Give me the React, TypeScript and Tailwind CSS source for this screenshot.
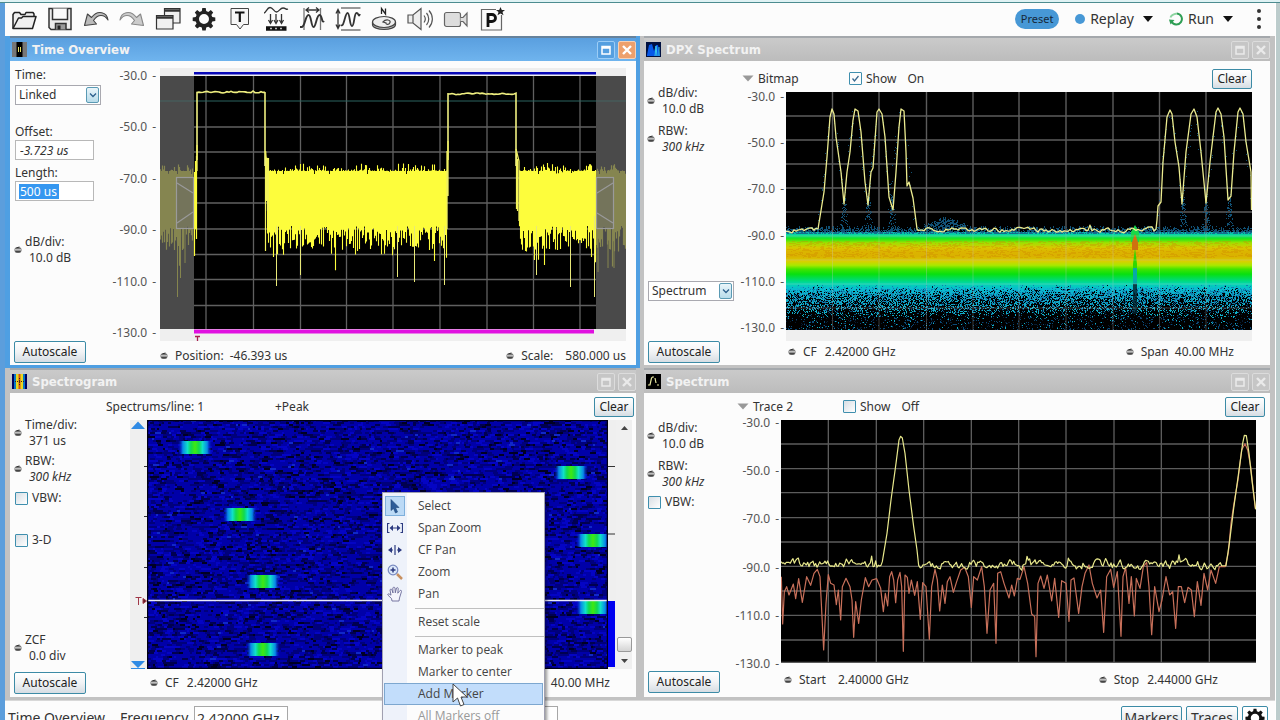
import React from "react";

/* ---------- deterministic noise ---------- */
function rng(seed: number) {
  let s = seed;
  return () => {
    s = (s + 0x6d2b79f5) | 0;
    let t = Math.imul(s ^ (s >>> 15), 1 | s);
    t = (t + Math.imul(t ^ (t >>> 7), 61 | t)) ^ t;
    return ((t ^ (t >>> 14)) >>> 0) / 4294967296;
  };
}

function noiseLine(from: number, to: number, mid: number, amp: number, seed: number, step = 2): number[][] {
  const r = rng(seed);
  const out: number[][] = [];
  let v = 0;
  for (let x = from; x <= to; x += step) {
    v = v * 0.55 + (r() - 0.5) * amp;
    out.push([x, mid + v - (r() > 0.97 ? amp * 0.8 : 0)]);
  }
  return out;
}
const toPath = (pts: number[][]) => "M" + pts.map((p) => `${p[0].toFixed(1)} ${p[1].toFixed(1)}`).join("L");

/* ---------- time overview plot ---------- */
function timeBars(from: number, to: number, seed: number) {
  const r = rng(seed);
  let d = "";
  for (let x = from; x < to; x++) {
    const top = 110 - Math.pow(r(), 4) * 8 + (r() > 0.9 ? 3 : 0);
    const a = r();
    let bottom = 165 + Math.pow(r(), 1.2) * 24 + (a > 0.8 ? 10 : 0);
    if (a > 0.95) bottom += 14;
    d += `M${x + 0.5} ${top.toFixed(1)}V${bottom.toFixed(1)}`;
  }
  return d;
}
const spikes = "M116.5 165V225M140.5 165V214M237.5 165V216M254.5 165V221M284.5 165V224M376.5 165V214M410.5 165V226M434.5 155V236";
const pulse = (x0: number, x1: number, y: number, seed: number) => {
  const pts = noiseLine(x0, x1, y, 1.6, seed, 2);
  return toPath([[x0, 99], ...pts, [x1, y], [x1, 105]]);
};

function TimePlot() {
  return (
    <svg viewBox="0 0 466 280" preserveAspectRatio="none" className="block h-full w-full" aria-label="Amplitude against time">
      <rect y="7" width="466" height="8" fill="#eeeeee" />
      <rect y="15" width="466" height="254" fill="#000" />
      <rect y="268" width="466" height="12" fill="#efefef" />
      <path d="M46 15V268M93.500 15V268M140.500 15V268M186.500 15V268M233 15V268M280 15V268M327 15V268M373.500 15V268M420 15V268M34 66H436M34 91H436M34 117H436M34 142H436M34 168H436M34 193.500H436M34 218.500H436M34 244.500H436" stroke="#606060" strokeWidth="1.3" />
      <path d="M34 40H436" stroke="#2c6460" strokeWidth="1.200" />
      <rect y="15" width="34" height="253" fill="#4a4a4a" />
      <rect x="436" y="15" width="30" height="253" fill="#4a4a4a" />
      <path d="M0 40H34M436 40H466" stroke="#456260" />
      <path d={timeBars(0, 33, 5)} stroke="#858550" strokeWidth="1.200" />
      <path d="M17.500 165V236M20.500 165V217M25 165V202M438 166V211M448 165V207M454 165V207" stroke="#85854e" />
      <path d={timeBars(436, 466, 9)} stroke="#858550" strokeWidth="1.200" />
      <path d={timeBars(107, 287, 21)} stroke="#fdfd3c" strokeWidth="1.100" />
      <path d={timeBars(359, 436, 33)} stroke="#fdfd3c" strokeWidth="1.100" />
      <path d={spikes} stroke="#e8e878" />
      <path d="M34.500 111V195M35.500 100V168M36.500 95V178" stroke="#fdfd3c" strokeWidth="1.200" />
      <path d="M105.500 95V190M106.500 97V140M107.500 98V150M108.500 97V166M356.500 92V148M357.500 98V150" stroke="#f4f45a" strokeWidth="1.200" />
      <path d={pulse(37, 105, 31, 3)} fill="none" stroke="#efef80" strokeWidth="1.600" />
      <path d="M105.500 90L106 97L108 98V110" fill="none" stroke="#efef60" strokeWidth="1.500" />
      <path d={pulse(288, 356, 33, 14)} fill="none" stroke="#efef80" strokeWidth="1.600" />
      <path d="M288 80V135M287 90V168M37 84V110M356 88L359 100V160" fill="none" stroke="#efef60" strokeWidth="1.300" />
      <g fill="#66666688" stroke="#9a9a9a" strokeWidth="1.200">
        <rect x="16.500" y="116.500" width="17" height="51" />
        <rect x="436.500" y="116.500" width="17" height="51" />
        <path d="M17 122L33 132M17 162L33 151M437 132L453 122M437 152L453 162" />
      </g>
      <rect x="34" y="11" width="402" height="2.500" fill="#0808b8" />
      <rect x="34" y="268.500" width="400" height="4" fill="#e010e0" />
      <path d="M35 275.500H40M37.500 275.500V281" stroke="#a82050" strokeWidth="1.300" />
    </svg>
  );
}

/* ---------- DPX plot ---------- */
const dpxPeaksLeft = [[32, 137], [38, 100], [41, 65], [44, 25], [46, 17], [48, 22], [50, 45], [55, 80], [58, 112], [61, 80], [64, 60], [67, 28], [69, 17], [72, 19], [75, 40], [79, 90], [82, 113], [85, 80], [87, 76], [91, 20], [93, 17], [96, 22], [99, 45], [103, 105], [107, 118], [110, 80], [113, 35], [115, 17], [118, 19], [120, 60], [121, 94], [123, 90], [127, 106], [131, 137]];
const dpxPeaksRight = [[370, 137], [371, 128], [372, 114], [375, 110], [377, 70], [381, 25], [384, 18], [386, 22], [389, 50], [393, 75], [396, 112], [400, 60], [405, 22], [408, 17], [411, 25], [415, 60], [420, 111], [424, 70], [430, 20], [432, 16], [435, 22], [438, 45], [442, 108], [445, 104], [448, 60], [452, 20], [454, 16], [457, 22], [460, 50], [465, 80], [465.5, 118]];
const dpxTrace = toPath([
  ...noiseLine(0, 31, 138, 4, 41),
  ...dpxPeaksLeft,
  ...noiseLine(132, 369, 138, 4, 47),
  ...dpxPeaksRight,
]);

function specks(seed: number) {
  const cols = ["#061a30", "#0a4a78", "#0e80b0", "#10b0c8", "#000000"];
  const d = cols.map(() => "");
  const r = rng(seed);
  for (let y = 192; y < 238; y++) {
    const t = (y - 192) / 46;
    const black = Math.min(0.84, t * 1.15);
    for (let x = 0; x < 466; x += 1) {
      const q = r();
      let i = 3;
      if (q < black) i = 4;
      else if (q < black + 0.05) i = 0;
      else if (q < black + 0.08 + t * 0.06) i = 1;
      else if (q < 0.6 + t * 0.4) i = 2;
      if (t < 0.25 && r() > t * 4) continue;
      d[i] += `M${x} ${y + 0.5}h1`;
    }
  }
  return cols.map((c, i) => ({ c, d: d[i] }));
}
function haze(seed: number) {
  const r = rng(seed);
  let d = "";
  for (let x = 0; x < 466; x++) {
    const bump = x > 132 && x < 185 ? 9 * Math.sin(((x - 132) / 53) * Math.PI) : 0;
    const n = 3 + r() * 5 + bump;
    for (let k = 0; k < n; k++) if (r() > 0.35) d += `M${x} ${(141 - k).toFixed(0)}.5h1`;
  }
  for (const c of [58, 82, 106, 397, 420, 443])
    for (let k = 0; k < 70; k++) {
      const h = r() * 34;
      d += `M${(c + (r() - 0.5) * (9 - h / 5)).toFixed(0)} ${(138 - h).toFixed(0)}.5h1`;
    }
  for (const c of [46, 69, 93, 115, 384, 408, 432, 454])
    for (let k = 0; k < 36; k++) {
      const h = r() * 110;
      const s = r() > 0.5 ? 1 : -1;
      d += `M${(c + s * (h / 9 + r() * 3)).toFixed(0)} ${(18 + h).toFixed(0)}.5h1`;
    }
  return d;
}
function grain(seed: number) {
  const r = rng(seed);
  let d = "";
  for (let k = 0; k < 1500; k++) d += `M${(r() * 464).toFixed(0)} ${Math.floor(149 + r() * 17)}.5h${(1 + r() * 3).toFixed(0)}`;
  return d;
}

function DpxPlot() {
  return (
    <svg viewBox="0 0 466 238" preserveAspectRatio="none" className="block min-h-0 w-full flex-1" aria-label="DPX bitmap of amplitude against frequency">
      <defs>
        <linearGradient id="dpx" x1="0" y1="140" x2="0" y2="238" gradientUnits="userSpaceOnUse">
          <stop offset="0" stopColor="#10a8b0" />
          <stop offset="0.030" stopColor="#00dca0" />
          <stop offset="0.070" stopColor="#20e818" />
          <stop offset="0.110" stopColor="#a0e000" />
          <stop offset="0.160" stopColor="#d8c800" />
          <stop offset="0.200" stopColor="#dcb400" />
          <stop offset="0.250" stopColor="#dab200" />
          <stop offset="0.300" stopColor="#d8d000" />
          <stop offset="0.340" stopColor="#a8e800" />
          <stop offset="0.380" stopColor="#40e400" />
          <stop offset="0.430" stopColor="#08e010" />
          <stop offset="0.480" stopColor="#00dc60" />
          <stop offset="0.530" stopColor="#00d8b0" />
          <stop offset="0.580" stopColor="#08bcd0" />
          <stop offset="1" stopColor="#0890c0" />
        </linearGradient>
      </defs>
      <rect width="466" height="238" fill="#000" />
      <path d="M46.500 0V238M93 0V238M140.500 0V238M187 0V238M233 0V238M280 0V238M327 0V238M373.500 0V238M420 0V238M0 24H466M0 48H466M0 72H466M0 96H466M0 120H466" stroke="#5c5c5c" strokeWidth="1.400" />
      <rect y="140" width="466" height="64" fill="url(#dpx)" />
      <path d={haze(71)} stroke="#14608a" strokeWidth="1" opacity="0.850" />
      <path d={grain(61)} stroke="#d08800" strokeWidth="1" opacity="0.350" />
      {specks(81).map((s) => (
        <path key={s.c} d={s.d} stroke={s.c} strokeWidth="1" />
      ))}
      <path d="M345 140L349 133L353 140V150H345Z" fill="#18d848" />
      <path d="M346 150L349 142L352 150V158H346Z" fill="#d07010" />
      <path d="M349 156L351 172V188H347V172Z" fill="#30d800" />
      <path d="M347 176H351V194H347Z" fill="#08a8a8" />
      <path d="M347 192H351V222H347Z" fill="#04202c" opacity="0.800" />
      <path d="M46.500 140V238M93 140V238M140.500 140V238M187 140V238M233 140V238M280 140V238M327 140V238M373.500 140V238M420 140V238M0 144H466M0 168H466M0 192H466M0 216H466" stroke="#c8c8c8" strokeWidth="1" opacity="0.300" />
      <path d={dpxTrace} fill="none" stroke="#ecec90" strokeWidth="1.300" strokeLinejoin="round" />
    </svg>
  );
}

/* ---------- spectrum plot, three units per pixel ---------- */
const shift = (pts: number[][], dx: number, dy: number) => pts.map(([x, y]) => [x + dx, y + dy]);
const orangeTrace = toPath([
  ...shift(
    [[424, 530], [428, 672], [433, 575], [440, 560], [447, 585], [460, 552], [467, 596], [476, 536], [487, 607], [500, 530], [512, 556], [522, 520], [532, 508], [540, 530], [551, 750], [558, 610], [565, 524], [572, 550], [582, 555], [589, 614], [595, 570], [602, 660], [607, 560], [618, 535], [630, 560], [636, 600], [641, 712], [647, 605], [656, 670], [664, 600], [676, 533], [686, 560], [696, 540], [710, 536], [722, 565], [730, 635], [736, 580], [743, 618], [749, 530], [755, 515], [761, 540], [767, 608], [773, 540], [780, 517], [785, 560], [790, 754], [795, 525], [802, 532], [807, 580], [814, 540], [824, 586], [832, 545], [841, 658], [848, 548], [858, 560], [868, 718], [875, 560], [885, 508], [892, 540], [899, 633], [907, 555], [915, 610], [922, 545], [930, 530], [940, 577], [950, 545]],
    -423,
    -60
  ),
  ...shift(
    [[2, 600], [14, 592], [25, 620], [34, 712], [41, 620], [52, 630], [65, 590], [73, 650], [81, 790], [90, 660], [101, 640], [108, 820], [113, 610], [122, 605], [132, 640], [147, 684], [155, 645], [163, 678], [172, 625], [180, 628], [192, 590], [203, 640], [215, 732], [224, 740], [228, 860], [234, 640], [242, 618], [252, 655], [262, 615], [275, 693], [284, 625], [296, 742], [305, 632], [318, 640], [327, 754], [333, 630], [342, 624], [356, 730], [366, 650], [375, 610], [387, 585], [397, 640], [411, 684], [422, 660], [431, 787], [440, 620], [452, 598], [461, 652], [472, 605], [483, 799], [489, 620], [497, 592], [507, 700], [514, 620], [523, 738], [529, 625], [540, 655], [550, 590], [560, 577], [567, 650], [575, 794], [584, 650], [597, 725], [606, 690], [618, 620], [629, 675], [638, 665], [647, 775], [655, 650], [664, 650], [674, 698], [684, 652], [694, 660], [703, 740], [712, 635], [723, 706], [732, 610], [743, 660], [753, 600], [767, 640], [778, 590], [796, 590], [805, 548], [813, 460], [822, 400], [834, 330], [845, 240], [855, 221], [863, 240], [872, 290], [886, 416]],
    537,
    -150
  ),
]);
const yellowTrace = toPath([
  ...noiseLine(0, 300, 433, 22, 101, 4),
  [304, 425], [318, 340], [330, 240], [345, 130], [354, 60], [359, 49], [364, 54], [372, 100], [384, 210], [398, 320], [408, 390], [413, 436],
  ...noiseLine(418, 1325, 434, 22, 109, 4),
  [1335, 437], [1345, 370], [1358, 265], [1372, 165], [1385, 70], [1390, 46], [1396, 47], [1404, 100], [1414, 190], [1424, 268],
]);

function SpectrumPlot() {
  return (
    <svg viewBox="0 0 1425 729" preserveAspectRatio="none" className="block min-h-0 w-full flex-1" aria-label="Amplitude against frequency">
      <rect width="1425" height="729" fill="#000" />
      <path d="M142 0V729M286 0V729M428 0V729M571 0V729M713 0V729M855 0V729M999 0V729M1141 0V729M1285 0V729M0 72H1425M0 146H1425M0 218H1425M0 293H1425M0 366H1425M0 439H1425M0 513H1425M0 586H1425M0 660H1425M0 727H1425" stroke="#5c5c5c" strokeWidth="4" />
      <path d={orangeTrace} fill="none" stroke="#c8705a" strokeWidth="3.600" strokeLinejoin="round" />
      <path d={yellowTrace} fill="none" stroke="#e8e88c" strokeWidth="3.600" strokeLinejoin="round" />
    </svg>
  );
}

/* ---------- spectrogram plot ---------- */
function blueCells(seed: number) {
  const cols = ["#000024", "#000050", "#00007c", "#0000a8", "#0404c4", "#1028c8"];
  const lim = [0.06, 0.2, 0.42, 0.84, 0.988, 1];
  const d = cols.map(() => "");
  const r = rng(seed);
  for (let y = 0; y < 250; y += 2) {
    let x = -2;
    while (x < 462) {
      const w = 2 + Math.floor(r() * 5);
      const q = r();
      const i = lim.findIndex((l) => q <= l);
      d[i] += `M${x} ${y + 1}h${w}`;
      x += w;
    }
  }
  return cols.map((c, i) => ({ c, d: d[i] }));
}
const bursts = [[48, 27], [93, 94], [116, 161], [116, 229], [424, 52], [446, 120], [446, 187]];

function SpectrogramPlot() {
  return (
    <svg viewBox="0 0 461 249" preserveAspectRatio="none" className="block h-full min-w-0 flex-1" aria-label="Spectrogram">
      <defs>
        <linearGradient id="burst">
          <stop offset="0" stopColor="#0010c0" stopOpacity="0" />
          <stop offset="0.140" stopColor="#0888e8" />
          <stop offset="0.280" stopColor="#10e0c8" />
          <stop offset="0.380" stopColor="#10d850" />
          <stop offset="0.500" stopColor="#40e810" />
          <stop offset="0.620" stopColor="#10d850" />
          <stop offset="0.720" stopColor="#10e0c8" />
          <stop offset="0.860" stopColor="#0888e8" />
          <stop offset="1" stopColor="#0010c0" stopOpacity="0" />
        </linearGradient>
      </defs>
      <rect width="461" height="249" fill="#000090" />
      {blueCells(131).map((b) => (
        <path key={b.c} d={b.d} stroke={b.c} strokeWidth="2" />
      ))}
      {bursts.map(([x, y]) => (
        <rect key={`${x}-${y}`} x={x - 17} y={y - 6} width="34" height="13" fill="url(#burst)" />
      ))}
      <path d="M0 180.500H461" stroke="#e8e8f8" strokeWidth="1.500" />
      <path d="M0.500 0V249M460.500 0V249M0 0.500H461M0 248.500H461" stroke="#000014" strokeWidth="1.500" />
    </svg>
  );
}

/* ---------- small pieces ---------- */
function Knob() {
  return (
    <svg viewBox="0 0 8 8" className="h-2 w-2 shrink-0" aria-hidden="true">
      <ellipse cx="4" cy="4" rx="3.600" ry="2.900" fill="#777" />
      <path d="M1 3.800h6" stroke="#ddd" strokeWidth="1" />
      <path d="M2.500 1.800l3-.8M1.500 5.800h5" stroke="#333" strokeWidth="1" />
    </svg>
  );
}

function PushButton({ children, className = "" }: { children: React.ReactNode; className?: string }) {
  return (
    <button type="button" className={`shrink-0 rounded-[2px] border border-[#3c8ba6] bg-gradient-to-b from-white via-[#f1f3f5] to-[#d6dde3] text-center text-xs text-[#222] ${className}`}>
      {children}
    </button>
  );
}

function Tick({ label, checked = false }: { label: string; checked?: boolean }) {
  return (
    <label className="flex h-4 items-center gap-1 text-xs">
      <input
        type="checkbox"
        defaultChecked={checked}
        className="h-[13px] w-[13px] appearance-none rounded-[1px] border border-[#3f8fae] bg-gradient-to-br from-[#d8dee4] to-white bg-center bg-no-repeat checked:bg-[url('data:image/svg+xml,%3Csvg%20xmlns=%22http://www.w3.org/2000/svg%22%20viewBox=%220%200%2011%2011%22%3E%3Cpath%20d=%22M2.500%205.500l2%202.500%204-5%22%20fill=%22none%22%20stroke=%22%233a6a90%22%20stroke-width=%221.300%22/%3E%3C/svg%3E')]"
      />
      {label}
    </label>
  );
}

function Setting({ id, label, value, italic = false }: { id: string; label: string; value: string; italic?: boolean }) {
  return (
    <div className="flex items-center gap-[3px]">
      <Knob />
      <div className="min-w-0">
        <label htmlFor={id} className="block text-xs leading-4">
          {label}
        </label>
        <input id={id} defaultValue={value} className={`block h-4 w-[74px] bg-transparent pl-1 text-xs outline-none ${italic ? "italic" : ""}`} />
      </div>
    </div>
  );
}

function Drop({ id, label, value }: { id: string; label: string; value: string }) {
  return (
    <div className="relative h-5 w-[86px] shrink-0">
      <select id={id} aria-label={label} className="h-5 w-full appearance-none border border-[#a9a9b0] bg-white pl-[3px] text-xs outline-none">
        <option>{value}</option>
      </select>
      <span className="pointer-events-none absolute top-[2px] right-[2px] flex h-4 w-[13px] items-center justify-center rounded-[2px] border border-[#5a9ab4] bg-gradient-to-b from-[#eaf5fa] to-[#b8dcea]">
        <svg viewBox="0 0 8 6" className="h-[6px] w-2" aria-hidden="true">
          <path d="M1 1.500L4 4.500L7 1.500" fill="none" stroke="#2c5f8c" strokeWidth="1.300" />
        </svg>
      </span>
    </div>
  );
}

function Axis({ className = "" }: { className?: string }) {
  return (
    <div className={`flex w-[50px] shrink-0 flex-col justify-between text-xs leading-4 text-[#555] ${className}`}>
      {["-30.0", "-50.0", "-70.0", "-90.0", "-110.0", "-130.0"].map((v) => (
        <div key={v} className="flex justify-end gap-[5px]">
          <span>{v}</span>
          <span>-</span>
        </div>
      ))}
    </div>
  );
}

function FootItem({ id, label, value, gap = "gap-2" }: { id: string; label: string; value: string; gap?: string }) {
  return (
    <div className="flex items-center gap-[7px]">
      <Knob />
      <div className={`flex ${gap}`} id={id}>
        <span>{label}</span>
        <span>{value}</span>
      </div>
    </div>
  );
}

const titleIcons: Record<string, React.ReactNode> = {
  time: (
    <>
      <rect width="15" height="15" fill="#777" />
      <rect x="4.500" width="6" height="15" fill="#000" />
      <path d="M6.500 5v5M8.500 5v5" stroke="#e8e060" />
    </>
  ),
  dpx: (
    <>
      <rect width="15" height="15" fill="#001040" />
      <path d="M1 13L3 3L6 2L8 9L10 3L12 3L14 14H1Z" fill="#0858e8" />
      <path d="M9 14L10 4L11 14M13 5V14" stroke="#38c8e8" fill="none" />
    </>
  ),
  gram: (
    <>
      <rect width="15" height="15" fill="#000060" />
      <rect x="2" width="11" height="15" fill="#0878c8" />
      <rect x="4" width="7" height="15" fill="#e8d820" />
      <rect x="6.500" width="2" height="15" fill="#d85010" />
      <path d="M3 7.500H12M7.500 4V11" stroke="#402020" strokeDasharray="1 1" />
    </>
  ),
  spec: (
    <>
      <rect width="15" height="15" fill="#000" />
      <path d="M2 11H4L5.500 4L6.500 3H8M9 4L10 9M11 11H13" stroke="#e8e8a0" fill="none" strokeWidth="1.200" />
    </>
  ),
};

function Panel({ title, icon, active = false, side, children }: { title: string; icon: string; active?: boolean; side: "left" | "right"; children: React.ReactNode }) {
  const frame = active ? "border-[#4f9fe2] bg-[#4f9fe2]" : "border-[#c2c2c2] bg-[#c2c2c2]";
  const edge = side === "left" ? "border-r-4 border-l-[5px]" : "border-r-[5px] border-l-4";
  const box = active ? "border-[#9ccdf6] bg-[#559fe0] text-white" : "border-[#dcdcdc] bg-[#c6c6c6] text-[#eaeaea]";
  const close = active ? "border-[#f6d0b4] bg-[#eda06c] text-white" : "border-[#dcdcdc] bg-[#c6c6c6] text-[#eaeaea]";
  return (
    <section className={`flex min-h-0 min-w-0 flex-col border-t-0 border-b-[3px] ${edge} ${frame}`}>
      <header className={`flex h-[25px] shrink-0 items-center gap-[5px] border-t-2 pl-[2px] ${active ? "border-t-[#66829c] bg-gradient-to-b from-[#5a9fdf] to-[#6fb4ee]" : "border-t-[#a4a8ac] bg-gradient-to-b from-[#cacaca] to-[#bcbcbc]"}`}>
        <svg viewBox="0 0 15 15" className="h-[15px] w-[15px]" aria-hidden="true">
          {titleIcons[icon]}
        </svg>
        <h2 className="flex-1 font-['DejaVu_Sans_Condensed','DejaVu_Sans',sans-serif] text-[13px] font-bold text-[#f2f2f2]">{title}</h2>
        <button type="button" aria-label={`Maximize ${title}`} className={`flex h-[18px] w-[18px] items-center justify-center rounded-[2px] border ${box}`}>
          <svg viewBox="0 0 10 10" className="h-[10px] w-[10px]" aria-hidden="true">
            <path d="M1 1.500H9V9H1ZM1 3H9" fill="none" stroke="currentColor" strokeWidth="1.500" />
          </svg>
        </button>
        <button type="button" aria-label={`Close ${title}`} className={`-ml-[2px] flex h-[18px] w-[18px] items-center justify-center rounded-[2px] border ${close}`}>
          <svg viewBox="0 0 12 12" className="h-3 w-3" aria-hidden="true">
            <path d="M2 2L10 10M10 2L2 10" stroke="currentColor" strokeWidth="2.400" />
          </svg>
        </button>
      </header>
      <div className="flex min-h-0 flex-1 bg-[#fcfcfc]">{children}</div>
    </section>
  );
}

/* ---------- toolbar ---------- */
const gearPath =
  "M11.300 2h3.400l.5 3 2.100.9 2.500-1.800 2.400 2.400-1.800 2.500.9 2.100 3 .5v3.400l-3 .5-.9 2.100 1.800 2.500-2.400 2.400-2.500-1.800-2.100.9-.5 3h-3.400l-.5-3-2.100-.9-2.500 1.800-2.400-2.400 1.800-2.500-.9-2.100-3-.5v-3.400l3-.5.9-2.100-1.800-2.500 2.400-2.400 2.500 1.800 2.100-.9zM13 8a5 5 0 1 0 0 10 5 5 0 0 0 0-10z";

const tools: { name: string; art: React.ReactNode }[] = [
  {
    name: "Open",
    art: (
      <g fill="#f0f0f0" stroke="#222" strokeWidth="1.500" strokeLinejoin="round">
        <path d="M2 22.500V8.500l1.500-2h5l1.500 2h4l1-2h7l1 1.500V13" />
        <path d="M2 22.500L7.500 12h3l1.500-1.500h13L21.500 22.500z" />
      </g>
    ),
  },
  {
    name: "Save",
    art: (
      <g fill="#ececec" stroke="#333" strokeWidth="1.500">
        <path d="M2 2.500H24V23.500H4L2 21.500Z" />
        <path d="M5.500 2.500V13.500H20.500V2.500" fill="#fafafa" />
        <path d="M8.500 23.500V17.500H19V23.500" fill="#999" />
        <rect x="10.500" y="19.500" width="3" height="4" fill="#222" stroke="none" />
      </g>
    ),
  },
  {
    name: "Undo",
    art: <path d="M25 14C24 6.500 15 3 8.500 11.500L4.500 8L1.500 19.500L13.500 18L10.500 14.500C15 7.500 21.500 8.500 25 14Z" fill="#bbb" stroke="#444" strokeWidth="1.100" strokeLinejoin="round" />,
  },
  {
    name: "Redo",
    art: <path d="M1 14C2 6.500 11 3 17.500 11.500L21.500 8L24.500 19.500L12.500 18L15.500 14.500C11 7.500 4.500 8.500 1 14Z" fill="#ccc" stroke="#888" strokeWidth="1.100" strokeLinejoin="round" />,
  },
  {
    name: "Displays",
    art: (
      <g fill="#f0f0f0" stroke="#333" strokeWidth="1.200">
        <path d="M9.500 2.500H25V17H9.500Z" />
        <path d="M9.500 4.500H25" strokeWidth="2.500" />
        <path d="M1.500 9.500H18V23H1.500Z" />
        <path d="M1.500 11.500H18" strokeWidth="2.500" />
      </g>
    ),
  },
  { name: "Settings", art: <path d={gearPath} fill="#222" fillRule="evenodd" /> },
  {
    name: "Trigger",
    art: (
      <g fill="none" stroke="#444" strokeWidth="1">
        <path d="M4 2.500H21.500V18.500H16.500L13 23L9.500 18.500H4Z" fill="#f6f6f6" />
        <path d="M8 6.500H17.500M12.800 6.500V16" stroke="#111" strokeWidth="2.200" />
      </g>
    ),
  },
  {
    name: "Acquire",
    art: (
      <g fill="none" stroke="#333" strokeWidth="1.300">
        <path d="M1 7C3 7 4 1.500 7 1.500S11 6 13.500 6S17 2 20 2S23 4 25 3" />
        <path d="M7.500 8V17M13 8V17M18.500 8V17" />
        <path d="M5.500 14L7.500 17.500L9.500 14M11 14L13 17.500L15 14M16.500 14L18.500 17.500L20.500 14" />
        <path d="M3 22.500H23.500" stroke="#111" strokeWidth="4.500" />
        <path d="M7 22.500H20" stroke="#bbb" strokeWidth="1.500" strokeDasharray="2 3" />
      </g>
    ),
  },
  {
    name: "Horizontal scale",
    art: (
      <g fill="none" stroke="#333" strokeWidth="1.300">
        <path d="M5 2V24M21.500 2V24" stroke="#777" />
        <path d="M7 4H20M10 1.500L7 4L10 6.500M17 1.500L20 4L17 6.500" />
        <path d="M1 21H3C6 20 6.500 9 9.500 9S12 21 14.500 21S17.500 9 20.500 9S22.500 18 25 15" strokeWidth="1.900" />
      </g>
    ),
  },
  {
    name: "Vertical scale",
    art: (
      <g fill="none" stroke="#333" strokeWidth="1.300">
        <path d="M6 2H25.500M6 24H25.500" stroke="#777" />
        <path d="M3 4V22M1 7.500L3 3.500L5 7.500M1 18.500L3 22.500L5 18.500" />
        <path d="M6 19C9 22 10 7 12.500 7S14.500 20 17 20S19 7 21.500 7S23.500 12 25 8" strokeWidth="1.800" />
      </g>
    ),
  },
  {
    name: "Compass",
    art: (
      <g fill="none" stroke="#444" strokeWidth="1.200">
        <path d="M1.500 16V18.500C1.500 25 24.500 25 24.500 18.500V16" fill="#ccc" />
        <ellipse cx="13" cy="16" rx="11.500" ry="5.500" fill="#eee" />
        <path d="M12 16C15 12.500 20 14 19 16.500S15 19 15 17Z" />
        <path d="M10.500 8V2.500L14.500 8V2.500" stroke="#222" strokeWidth="1.300" />
      </g>
    ),
  },
  {
    name: "Audio",
    art: (
      <g fill="#eee" stroke="#555" strokeWidth="1.200">
        <path d="M1 9H6L14 2.500V23.500L6 17H1ZM6 9V17" />
        <path d="M17 9.500C18.500 11.500 18.500 14.500 17 16.500M19.500 7C22.500 10.500 22.500 15.500 19.500 19M22 4.500C26.500 9.500 26.500 16.500 22 21.500" fill="none" />
      </g>
    ),
  },
  {
    name: "Record",
    art: (
      <g fill="#ddd" stroke="#666" strokeWidth="1.200">
        <rect x="1.500" y="6.500" width="16" height="14" rx="2" />
        <path d="M17.500 11.500L20 11.500L24 7V20L20 15.500H17.500" />
      </g>
    ),
  },
  {
    name: "Presets",
    art: (
      <g fill="none" stroke="#666" strokeWidth="1.200">
        <path d="M17 3.500H2.500V24H22.500V9" fill="#fafafa" />
        <path d="M9 21V8.500H13A3.400 3.400 0 0 1 13 15.500H9" stroke="#111" strokeWidth="2.800" />
        <path d="M21.500 1L22.800 4H26L23.500 6L24.500 9.300L21.500 7.400L18.500 9.300L19.500 6L17 4H20.200Z" fill="#222" stroke="none" />
      </g>
    ),
  },
];

function Caret() {
  return (
    <svg viewBox="0 0 10 6" className="h-[6px] w-[10px]" aria-hidden="true">
      <path d="M0 0H10L5 6Z" fill="#111" />
    </svg>
  );
}

function Toolbar() {
  return (
    <div className="flex h-8 shrink-0 items-center bg-[#fcfcfc] pl-px text-sm" role="toolbar">
      <div className="flex flex-1">
        {tools.map((t) => (
          <button key={t.name} type="button" aria-label={t.name} className="flex h-8 w-9 items-center justify-center">
            <svg viewBox="0 0 26 26" className="h-[26px] w-[26px]">
              {t.art}
            </svg>
          </button>
        ))}
      </div>
      <button type="button" className="mr-4 h-5 w-11 rounded-full bg-[#4798d6] text-[11px] text-[#16283a]">
        Preset
      </button>
      <button type="button" className="mr-4 flex items-center gap-[5px] text-[#333]">
        <span className="h-[10px] w-[10px] rounded-full bg-[#4798d6]" />
        <span className="mr-1">Replay</span>
        <Caret />
      </button>
      <button type="button" className="mr-5 flex items-center gap-[5px] text-[#333]">
        <svg viewBox="0 0 14 14" className="h-[14px] w-[14px]" aria-hidden="true">
          <path d="M8 1.500A5.500 5.500 0 1 1 2.500 9.500" fill="none" stroke="#2e9e54" strokeWidth="2" />
          <path d="M1.500 5.500C2 3.500 3.500 2.200 8 1.500" stroke="#8cd4a0" strokeWidth="1.800" fill="none" />
          <path d="M0 7.500L5.500 8L1.500 12.500Z" fill="#2e9e54" />
        </svg>
        <span className="mr-1">Run</span>
        <Caret />
      </button>
      <button type="button" aria-label="More" className="mr-[10px] flex h-6 w-3 flex-col items-center justify-between py-[2px]">
        <span className="h-1 w-1 rounded-full bg-[#333]" />
        <span className="h-1 w-1 rounded-full bg-[#333]" />
        <span className="h-1 w-1 rounded-full bg-[#333]" />
      </button>
    </div>
  );
}

/* ---------- context menu ---------- */
function MenuRow({ label, icon, state = "" }: { label: string; icon?: React.ReactNode; state?: "" | "hover" | "off" | "picked" }) {
  return (
    <button
      type="button"
      role="menuitem"
      className={`mx-px flex h-[22px] items-center border text-xs ${state === "hover" ? "border-[#7da7cf] bg-[#c2ddfb]" : "border-transparent"} ${state === "off" ? "text-[#999]" : "text-[#444]"}`}
    >
      <span className={`flex h-5 w-5 items-center justify-center ${state === "picked" ? "border border-[#7fb0dc] bg-[#bcdaf6]" : ""}`}>{icon}</span>
      <span className="ml-[13px]">{label}</span>
    </button>
  );
}

const art = (children: React.ReactNode) => (
  <svg viewBox="0 0 16 16" className="h-4 w-4" fill="none" stroke="#2c3a80" strokeWidth="1.200" aria-hidden="true">
    {children}
  </svg>
);

function ContextMenu() {
  return (
    <div role="menu" className="absolute top-[492px] left-[382px] flex w-[163px] flex-col border border-[#a0a0b0] bg-[linear-gradient(to_right,#eef2fa_24px,#fcfcfc_24px)] pt-[2px] font-['Open_Sans','Noto_Sans',sans-serif] shadow-[2px_2px_3px_#00000066]">
      <MenuRow label="Select" state="picked" icon={art(<path d="M4 1.500L12 9.500H8.500L10.500 14L8.500 15L6.500 10.500L4 12.500Z" fill="#2c5c98" stroke="#1c4478" strokeWidth="0.600" />)} />
      <MenuRow
        label="Span Zoom"
        icon={art(
          <>
            <path d="M2.500 3.500H0.500V12.500H2.500M13.500 3.500H15.500V12.500H13.500M4 8H12" />
            <path d="M6 5V11L2.500 8ZM10 5V11L13.500 8Z" fill="#2c3a80" stroke="none" />
          </>
        )}
      />
      <MenuRow
        label="CF Pan"
        icon={art(
          <>
            <path d="M8 3V13M3 8H6M10 8H13" />
            <path d="M5 5V11L1 8ZM11 5V11L15 8Z" fill="#2c3a80" stroke="none" />
          </>
        )}
      />
      <MenuRow
        label="Zoom"
        icon={art(
          <>
            <path d="M10 10L15 15" stroke="#c89060" strokeWidth="2.500" />
            <circle cx="6" cy="6" r="4.800" fill="#dce8fa" stroke="#7888c0" />
            <path d="M3.500 6H8.500M6 3.500V8.500" strokeWidth="1.500" />
          </>
        )}
      />
      <MenuRow label="Pan" icon={art(<path d="M5 15L4.500 12.500L0.800 9C0.500 7.500 2 7.500 4 9.200L3 4C3.500 2.500 4.600 3 5 4L6 7L5.800 2C6.500 0.700 7.600 1 8 2L8.300 6.800L9.500 2C10.500 1 11.400 1.800 11.200 3L10.800 7.200L13 4.500C14 4 14.800 4.700 14.500 5.500L12.500 12L12 15Z" fill="#f4f4fc" stroke="#6a6a98" strokeWidth="0.900" />)} />
      <div className="my-[2px] ml-8 h-[2px] border-b border-[#c0c0c0]" />
      <MenuRow label="Reset scale" />
      <div className="my-[2px] ml-8 h-[2px] border-b border-[#c0c0c0]" />
      <MenuRow label="Marker to peak" />
      <MenuRow label="Marker to center" />
      <MenuRow label="Add Marker" state="hover" />
      <MenuRow label="All Markers off" state="off" />
      <svg viewBox="0 0 17 25" className="pointer-events-none absolute top-[190px] left-[69px] h-[25px] w-[17px]" aria-hidden="true">
        <path d="M1 1V19L5.500 15L8.500 23L12 21.500L9 14H15Z" fill="#fff" stroke="#444" strokeWidth="1" />
      </svg>
    </div>
  );
}

/* ---------- page ---------- */
export default function App() {
  return (
    <div className="relative flex h-screen flex-col overflow-hidden bg-[#fcfcfc] font-['Noto_Sans','Open_Sans',sans-serif] text-[#333]">
      <div className="h-[3px] shrink-0 border-b border-[#4c8c90] bg-[#dff2f4]" />
      <div className="flex min-h-0 flex-1 border-r-4 border-l-[5px] border-r-[#bccccc] border-l-[#5c9edc]">
        <div className="flex min-w-0 flex-1 flex-col border-r border-white">
          <Toolbar />
          <div className="mt-px grid min-h-0 flex-1 grid-cols-2 grid-rows-2">
            <Panel title="Time Overview" icon="time" active side="left">
              <div className="flex w-24 shrink-0 flex-col pt-[6px] pb-[2px] pl-[5px] text-xs leading-4">
                <label htmlFor="time-mode">Time:</label>
                <div className="mt-[2px] flex">
                  <Drop id="time-mode" label="Time" value="Linked" />
                </div>
                <label htmlFor="offset" className="mt-[19px]">
                  Offset:
                </label>
                <input id="offset" defaultValue="-3.723 us" className="h-5 w-[79px] border border-[#b8b8b8] bg-white pl-1 italic outline-none" />
                <label htmlFor="length" className="mt-[5px]">
                  Length:
                </label>
                <input id="length" defaultValue="500 us" className="h-5 w-[79px] border border-[#b8b8b8] bg-white bg-[linear-gradient(#3597f0,#3597f0)] bg-[size:40px_15px] bg-[position:3px_2px] bg-no-repeat pl-1 text-white outline-none" />
                <div className="-ml-px mt-[33px]">
                  <Setting id="to-div" label="dB/div:" value="10.0 dB" />
                </div>
                <PushButton className="-ml-px mt-auto h-[22px] w-[72px]">Autoscale</PushButton>
              </div>
              <div className="flex min-w-0 flex-1 flex-col">
                <div className="flex min-h-0 flex-1 pr-[10px]">
                  <Axis className="mr-1 pt-[7px]" />
                  <div className="min-w-0 flex-1">
                    <TimePlot />
                  </div>
                </div>
                <div className="flex h-6 shrink-0 items-start justify-between pt-[7px] pr-[10px] pl-[54px] text-xs leading-4">
                  <FootItem id="to-pos" label="Position:" value="-46.393 us" gap="gap-[6px]" />
                  <FootItem id="to-scale" label="Scale:" value="580.000 us" gap="gap-3" />
                </div>
              </div>
            </Panel>

            <Panel title="DPX Spectrum" icon="dpx" side="right">
              <div className="flex w-[90px] shrink-0 flex-col pt-6 pb-[2px] pl-1 text-xs leading-4">
                <div className="-ml-px flex flex-col gap-[6px]">
                  <Setting id="dpx-div" label="dB/div:" value="10.0 dB" />
                  <Setting id="dpx-rbw" label="RBW:" value="300 kHz" italic />
                </div>
                <div className="mt-auto mb-10 flex">
                  <Drop id="dpx-view" label="View" value="Spectrum" />
                </div>
                <PushButton className="h-[22px] w-[72px]">Autoscale</PushButton>
              </div>
              <div className="flex min-w-0 flex-1 flex-col">
                <div className="flex h-[31px] shrink-0 items-center pt-[4px] pr-[18px] pl-2 text-xs">
                  <button type="button" className="flex w-[107px] items-center gap-1">
                    <svg viewBox="0 0 12 7" className="h-[7px] w-3" aria-hidden="true">
                      <path d="M0.500 0.500H11.500L6 6.500Z" fill="#999" />
                    </svg>
                    Bitmap
                  </button>
                  <Tick label="Show" checked />
                  <span className="ml-[11px] flex-1">On</span>
                  <PushButton className="h-5 w-10">Clear</PushButton>
                </div>
                <div className="flex min-h-0 flex-1 pr-[18px]">
                  <Axis className="-mt-[3px] mr-[2px] pb-[5px]" />
                  <div className="flex min-w-0 flex-1 flex-col">
                    <DpxPlot />
                    <div className="h-[11px] bg-[#efefef]" />
                  </div>
                </div>
                <div className="flex h-6 shrink-0 items-start justify-between pt-[3px] pr-9 pl-[54px] text-xs leading-4">
                  <FootItem id="dpx-cf" label="CF" value="2.42000 GHz" />
                  <FootItem id="dpx-span" label="Span" value="40.00 MHz" gap="gap-[6px]" />
                </div>
              </div>
            </Panel>

            <Panel title="Spectrogram" icon="gram" side="left">
              <div className="flex w-24 shrink-0 flex-col pt-6 pb-[3px] pl-[5px] text-xs leading-4">
                <div className="-ml-px flex flex-col gap-1">
                  <Setting id="sg-div" label="Time/div:" value="371 us" />
                  <Setting id="sg-rbw" label="RBW:" value="300 kHz" italic />
                </div>
                <div className="mt-[5px] flex flex-col gap-[26px]">
                  <Tick label="VBW:" />
                  <Tick label="3-D" />
                </div>
                <div className="-ml-px mt-auto mb-2">
                  <Setting id="sg-zcf" label="ZCF" value="0.0 div" />
                </div>
                <PushButton className="-ml-px h-[22px] w-[72px]">Autoscale</PushButton>
              </div>
              <div className="flex min-w-0 flex-1 flex-col">
                <div className="flex h-[27px] shrink-0 items-center pr-[2px] text-xs">
                  <span className="w-[169px]">Spectrums/line: 1</span>
                  <span className="flex-1">+Peak</span>
                  <PushButton className="h-5 w-10">Clear</PushButton>
                </div>
                <div className="flex min-h-0 flex-1 pr-1 pl-6">
                  <svg viewBox="0 0 17 249" preserveAspectRatio="none" className="h-full w-[17px] shrink-0 bg-[#efefef]" aria-hidden="true">
                    <path d="M1 9L8 1.500L15 9ZM1 241H15L8 248Z" fill="#2f8ae4" />
                    <path d="M1 248.500H15" stroke="#2f8ae4" />
                    <path d="M14 46.500H17M14 96.500H17M14 147.500H17M14 197.500H17" stroke="#333" />
                    <path d="M5.500 177.500H11.500M8.500 177.500V185M13 178.500V183.500L16.500 181Z" stroke="#a03848" fill="#602020" strokeWidth="1" />
                  </svg>
                  <SpectrogramPlot />
                  <svg viewBox="0 0 8 249" preserveAspectRatio="none" className="h-full w-2 shrink-0 bg-[#efefef]" aria-hidden="true">
                    <path d="M0 46.500H7M0 114H7" stroke="#333" />
                    <rect y="181" width="7" height="66" fill="#0000f0" />
                  </svg>
                  <div className="flex w-4 shrink-0 flex-col items-center bg-[#f0f0f0] py-[6px]">
                    <svg viewBox="0 0 7 4" className="h-1 w-[7px]" aria-hidden="true">
                      <path d="M0 4L3.500 0L7 4Z" fill="#444" />
                    </svg>
                    <button type="button" aria-label="Scroll thumb" className="mt-auto mb-[7px] h-[15px] w-[15px] rounded-[2px] border border-[#999] bg-gradient-to-b from-white to-[#d4d4d4]" />
                    <svg viewBox="0 0 7 4" className="h-1 w-[7px]" aria-hidden="true">
                      <path d="M0 0H7L3.500 4Z" fill="#444" />
                    </svg>
                  </div>
                </div>
                <div className="flex h-7 shrink-0 items-start justify-between pt-[6px] pr-[26px] pl-11 text-xs leading-4">
                  <FootItem id="sg-cf" label="CF" value="2.42000 GHz" />
                  <span>40.00 MHz</span>
                </div>
              </div>
            </Panel>

            <Panel title="Spectrum" icon="spec" side="right">
              <div className="flex w-[90px] shrink-0 flex-col pt-[27px] pb-1 pl-1 text-xs leading-4">
                <div className="-ml-px mb-1 flex flex-col gap-[6px]">
                  <Setting id="sp-div" label="dB/div:" value="10.0 dB" />
                  <Setting id="sp-rbw" label="RBW:" value="300 kHz" italic />
                </div>
                <Tick label="VBW:" />
                <PushButton className="mt-auto h-[22px] w-[72px]">Autoscale</PushButton>
              </div>
              <div className="flex min-w-0 flex-1 flex-col">
                <div className="flex h-[27px] shrink-0 items-center pr-[5px] pl-[3px] text-xs">
                  <button type="button" className="flex w-[106px] items-center gap-1">
                    <svg viewBox="0 0 12 7" className="h-[7px] w-3" aria-hidden="true">
                      <path d="M0.500 0.500H11.500L6 6.500Z" fill="#999" />
                    </svg>
                    Trace 2
                  </button>
                  <Tick label="Show" />
                  <span className="ml-[11px] flex-1">Off</span>
                  <PushButton className="h-5 w-10">Clear</PushButton>
                </div>
                <div className="flex min-h-0 flex-1 pr-[14px]">
                  <Axis className="-mt-[5px] -ml-[5px] mr-[2px]" />
                  <div className="flex min-w-0 flex-1 flex-col pb-[9px]">
                    <SpectrumPlot />
                  </div>
                </div>
                <div className="flex h-[25px] shrink-0 items-start justify-between pr-[52px] pl-[50px] text-xs leading-4">
                  <FootItem id="sp-start" label="Start" value="2.40000 GHz" gap="gap-3" />
                  <FootItem id="sp-stop" label="Stop" value="2.44000 GHz" />
                </div>
              </div>
            </Panel>
          </div>
          <div className="flex h-5 shrink-0 overflow-hidden border-t border-[#d8d8d8] pt-[5px] pl-[3px] text-sm leading-6">
            <span className="w-28">Time Overview</span>
            <label htmlFor="frequency" className="w-[74px]">
              Frequency
            </label>
            <input id="frequency" defaultValue="2.42000 GHz" className="h-6 w-[94px] shrink-0 border border-[#a8a8a8] bg-white pl-[2px] text-sm outline-none" />
            <input aria-label="Value" className="ml-28 h-6 w-[158px] shrink-0 border border-[#a8a8a8] bg-white outline-none" />
            <div className="flex flex-1 justify-end gap-1 pr-[7px]">
              <button type="button" className="h-6 w-[61px] rounded-[2px] border border-[#3c8ba6] bg-gradient-to-b from-white to-[#d6dde3] leading-5">
                Markers
              </button>
              <button type="button" className="h-6 w-[52px] rounded-[2px] border border-[#3c8ba6] bg-gradient-to-b from-white to-[#d6dde3] leading-5">
                Traces
              </button>
              <button type="button" aria-label="Settings" className="flex h-6 w-[26px] items-center justify-center rounded-[2px] border border-[#3c8ba6] bg-white">
                <svg viewBox="0 0 26 26" className="h-[22px] w-[22px]">
                  <path d={gearPath} fill="#111" fillRule="evenodd" />
                </svg>
              </button>
            </div>
          </div>
        </div>
      </div>
      <ContextMenu />
    </div>
  );
}
